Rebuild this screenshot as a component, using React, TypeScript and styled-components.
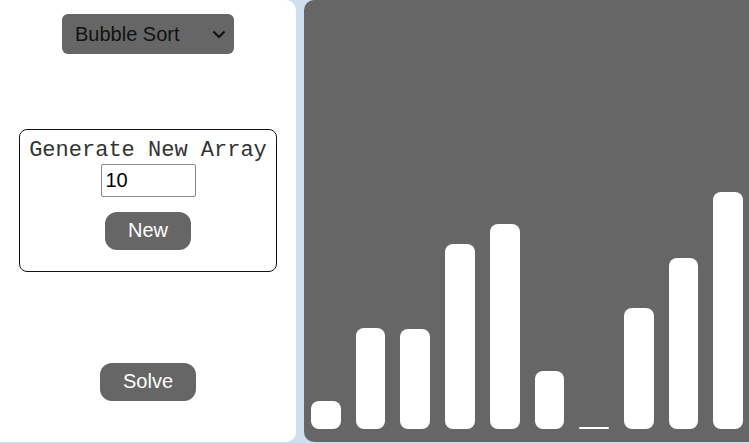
import styled, { createGlobalStyle } from 'styled-components';

const GlobalStyle = createGlobalStyle`
    html, body {
        margin: 0;
        padding: 0;
        background: #cfdeee;
        font-family: "Liberation Sans", Arial, sans-serif;
    }
`;

const bars = [28, 101, 100, 185, 205, 58, 2, 121, 171, 237];

function App() {
    return (
        <>
            <GlobalStyle />
            <StyledLayout>
                <Sidebar>
                    <SelectWrap>
                        <AlgoSelect defaultValue="bubble">
                            <option value="bubble">Bubble Sort</option>
                            <option value="selection">Selection Sort</option>
                            <option value="insertion">Insertion Sort</option>
                        </AlgoSelect>
                        <Chevron width="16" height="16" viewBox="0 0 16 16">
                            <path d="M2.5 5.5 L8 11 L13.5 5.5" fill="none" stroke="#111" strokeWidth="2.2" />
                        </Chevron>
                    </SelectWrap>

                    <GenerateBox>
                        <BoxTitle>Generate New Array</BoxTitle>
                        <SizeInput type="text" defaultValue="10" />
                        <PillButton $mt={15}>New</PillButton>
                    </GenerateBox>

                    <PillButton $mt={91}>Solve</PillButton>
                </Sidebar>

                <Canvas>
                    {bars.map((h, i) => (
                        <Bar key={i} style={{ height: h }} />
                    ))}
                </Canvas>
            </StyledLayout>
        </>
    );
}

const StyledLayout = styled.div`
    display: flex;
    gap: 8px;
    height: 442px;
`

const Sidebar = styled.div`
    width: 296px;
    flex-shrink: 0;
    background: #ffffff;
    border-radius: 0 10px 10px 0;
    display: flex;
    flex-direction: column;
    align-items: center;
    padding-top: 14px;
    box-sizing: border-box;
`

const SelectWrap = styled.div`
    position: relative;
    width: 172px;
    height: 40px;
`

const AlgoSelect = styled.select`
    appearance: none;
    width: 100%;
    height: 100%;
    background: #666666;
    color: #111;
    border: none;
    border-radius: 6px;
    padding: 0 0 0 13px;
    font-family: "Liberation Sans", Arial, sans-serif;
    font-size: 20px;
    outline: none;
`

const Chevron = styled.svg`
    position: absolute;
    right: 7px;
    top: 12px;
    pointer-events: none;
`

const GenerateBox = styled.div`
    margin-top: 75px;
    width: 258px;
    height: 143px;
    box-sizing: border-box;
    border: 1px solid #111;
    border-radius: 8px;
    display: flex;
    flex-direction: column;
    align-items: center;
    padding-top: 9px;
`

const BoxTitle = styled.div`
    font-family: "Liberation Mono", "Courier New", monospace;
    font-size: 22px;
    line-height: 23px;
    color: #333;
    white-space: nowrap;
`

const SizeInput = styled.input`
    margin-top: 2px;
    width: 95px;
    height: 33px;
    box-sizing: border-box;
    border: 1px solid #8a8a8a;
    border-radius: 2px;
    padding: 0 4px;
    font-family: "Liberation Sans", Arial, sans-serif;
    font-size: 20px;
    color: #000;
    outline: none;
`

const PillButton = styled.button<{ $mt: number }>`
    margin-top: ${props => props.$mt}px;
    height: 38px;
    padding: 0 23px 2px;
    background: #666666;
    color: #ffffff;
    border: none;
    border-radius: 12px;
    font-family: "Liberation Sans", Arial, sans-serif;
    font-size: 20px;
    cursor: pointer;
`

const Canvas = styled.div`
    flex: 1;
    background: #666666;
    border-radius: 10px 0 0 10px;
    display: flex;
    align-items: flex-end;
    gap: 15px;
    padding: 0 6px 13px 7px;
`

const Bar = styled.div`
    flex: 1;
    background: #ffffff;
    border-radius: 8px;
`

export default App;
